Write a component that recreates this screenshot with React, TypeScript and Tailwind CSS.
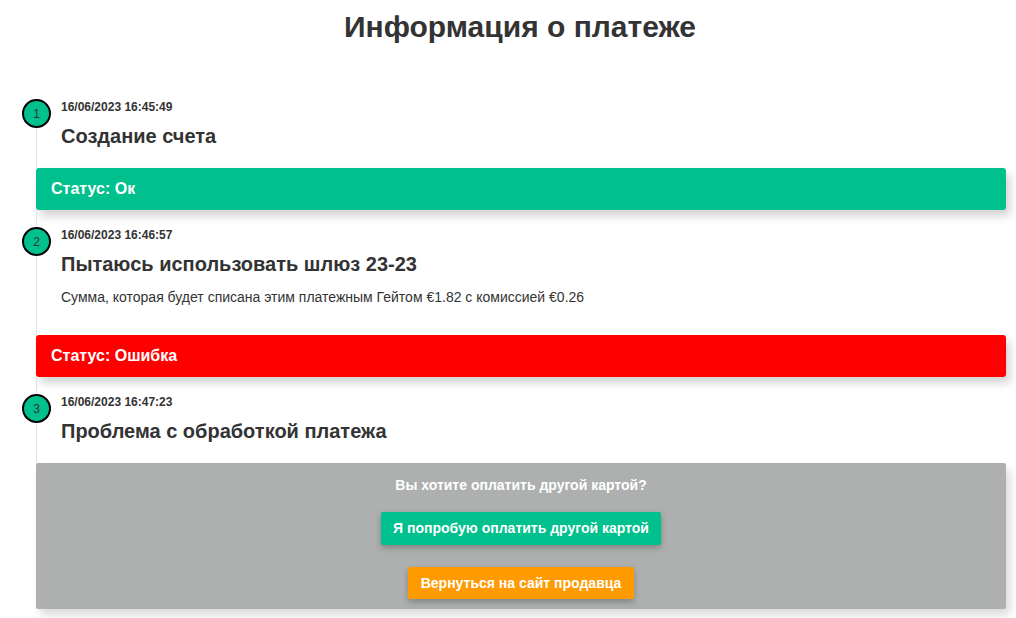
import React from 'react';

type Step = {
  num: number;
  date: string;
  title: string;
  note?: string;
};

const steps: Step[] = [
  { num: 1, date: '16/06/2023 16:45:49', title: 'Создание счета' },
  {
    num: 2,
    date: '16/06/2023 16:46:57',
    title: 'Пытаюсь использовать шлюз 23-23',
    note: 'Сумма, которая будет списана этим платежным Гейтом €1.82 с комиссией €0.26',
  },
  { num: 3, date: '16/06/2023 16:47:23', title: 'Проблема с обработкой платежа' },
];

function StepItem({ step, first }: { step: Step; first?: boolean }) {
  return (
    <div className={`relative border-l border-[#dbe4ea] pl-[24px] ${first ? 'pt-0 border-l-transparent' : 'pt-[17px]'} ${step.note ? 'pb-[28px]' : 'pb-[18px]'}`}>
      {first && <div className="absolute left-[-1px] top-[20px] bottom-0 border-l border-[#dbe4ea]" />}
      <div
        className={`absolute left-[-15px] ${first ? 'top-0' : 'top-[17px]'} w-[29px] h-[29px] rounded-full border-2 border-black bg-[#00c08d] flex items-center justify-center text-[12px] text-[#333]`}
      >
        {step.num}
      </div>
      <div className="text-[12px] leading-[16px] font-bold text-[#333]">{step.date}</div>
      <div className="mt-[7px] text-[20px] leading-[28px] font-bold text-[#333]">{step.title}</div>
      {step.note && <p className="mt-[9px] text-[14px] leading-[20px] text-[#333]">{step.note}</p>}
    </div>
  );
}

function StatusBar({ label, color }: { label: string; color: string }) {
  return (
    <div
      className={`${color} h-[42px] rounded-[3px] flex items-center pl-[15px] text-[16px] font-bold text-white shadow-[4px_6px_10px_rgba(0,0,0,0.18)]`}
    >
      {label}
    </div>
  );
}

export default function App() {
  return (
    <div className="min-h-[618px] bg-white text-[#333]" style={{ fontFamily: '"Liberation Sans", Arial, sans-serif' }}>
      <h1 className="pt-[9px] pl-[24px] text-center text-[30px] leading-[36px] font-bold text-[#333]">
        Информация о платеже
      </h1>

      <div className="ml-[36px] mr-[10px] mt-[54px]">
        <StepItem step={steps[0]} first />
        <StatusBar label="Статус: Ок" color="bg-[#00c08d]" />
        <StepItem step={steps[1]} />
        <StatusBar label="Статус: Ошибка" color="bg-[#ff0000]" />
        <StepItem step={steps[2]} />

        <div className="bg-[#adb0af] rounded-[2px] flex flex-col items-center pt-[12px] pb-[10px] shadow-[4px_6px_10px_rgba(0,0,0,0.15)]">
          <div className="text-[14px] leading-[20px] font-bold text-white">Вы хотите оплатить другой картой?</div>
          <button className="mt-[17px] h-[33px] px-[12px] bg-[#00c08d] text-white text-[14px] font-bold rounded-[2px] shadow-[0_3px_6px_rgba(0,0,0,0.25)]">
            Я попробую оплатить другой картой
          </button>
          <button className="mt-[22px] h-[32px] px-[13px] bg-[#ff9a00] text-white text-[14px] font-bold rounded-[2px] shadow-[0_3px_6px_rgba(0,0,0,0.25)]">
            Вернуться на сайт продавца
          </button>
        </div>
      </div>
    </div>
  );
}
